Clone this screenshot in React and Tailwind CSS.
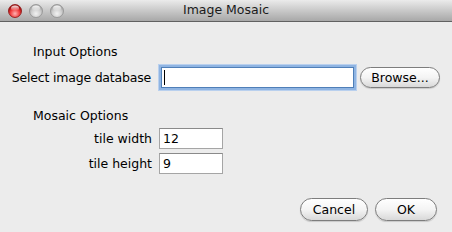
import React from "react";

const Light = ({ id, from, mid, to, stroke }) => (
  <svg width="14" height="14" viewBox="0 0 14 14">
    <defs>
      <radialGradient id={id} cx="50%" cy="70%" r="60%">
        <stop offset="0%" stopColor={from} />
        <stop offset="60%" stopColor={mid} />
        <stop offset="100%" stopColor={to} />
      </radialGradient>
      <linearGradient id={id + "h"} x1="0" y1="0" x2="0" y2="1">
        <stop offset="0%" stopColor="#fff" stopOpacity="0.9" />
        <stop offset="100%" stopColor="#fff" stopOpacity="0" />
      </linearGradient>
    </defs>
    <circle cx="7" cy="7" r="6.5" fill={`url(#${id})`} stroke={stroke} strokeWidth="0.8" />
    <ellipse cx="7" cy="4.2" rx="4" ry="2.6" fill={`url(#${id}h)`} />
  </svg>
);

const PillButton = ({ children, className }) => (
  <div
    className={
      "flex items-center justify-center rounded-full border border-[#7d7d7d] bg-linear-to-b from-white via-[#f4f4f4] to-[#d9d9d9] shadow-[0_1px_1px_rgba(0,0,0,0.15)] text-black " +
      className
    }
  >
    {children}
  </div>
);

const SmallField = ({ value }) => (
  <div className="w-[64px] h-[21px] border border-[#a5a5a5] border-t-[#8a8a8a] bg-white flex items-center pl-[3px] text-[12.5px] leading-4 text-black">
    {value}
  </div>
);

export default function App() {
  return (
    <div
      className="w-[452px] h-[232px] bg-[#ececec] flex flex-col overflow-hidden"
      style={{ fontFamily: '"DejaVu Sans", "Liberation Sans", sans-serif' }}
    >
      {/* title bar */}
      <div className="relative h-[22px] shrink-0 bg-linear-to-b from-[#ebebeb] to-[#a8a8a8] border-b border-[#616161] flex items-center">
        <div className="flex items-center gap-[7px] pl-[8px] pt-[1px]">
          <Light id="r" from="#ffb3b3" mid="#f03c3c" to="#9e0c0c" stroke="#8a1010" />
          <Light id="g1" from="#f2f2f2" mid="#cfcfcf" to="#a9a9a9" stroke="#8f8f8f" />
          <Light id="g2" from="#f2f2f2" mid="#cfcfcf" to="#a9a9a9" stroke="#8f8f8f" />
        </div>
        <div className="absolute inset-0 flex items-center justify-center text-[12.5px] text-[#1a1a1a]">
          Image Mosaic
        </div>
      </div>

      {/* body */}
      <div className="flex flex-col pt-[22px] text-[12.5px] leading-4 text-black">
        <div className="pl-[33px]">Input Options</div>

        <div className="flex items-center mt-[7px] h-[21px]">
          <div className="w-[151px] text-right tracking-[-0.2px]">Select image database</div>
          <div className="ml-[10px] w-[193px] h-[21px] bg-white border border-[#4f7fb8] shadow-[0_0_0_2px_#8fb4e2,0_0_0_3px_#b9d0ee] flex items-center pl-[2px]">
            <span className="w-px h-[15px] bg-black" />
          </div>
          <PillButton className="ml-[6px] w-[80px] h-[21px] text-[12.5px]">Browse...</PillButton>
        </div>

        <div className="pl-[33px] mt-[20px]">Mosaic Options</div>

        <div className="flex flex-col gap-[4px] mt-[4px]">
          <div className="flex items-center">
            <div className="w-[152px] text-right">tile width</div>
            <div className="ml-[7px]">
              <SmallField value="12" />
            </div>
          </div>
          <div className="flex items-center">
            <div className="w-[152px] text-right">tile height</div>
            <div className="ml-[7px]">
              <SmallField value="9" />
            </div>
          </div>
        </div>

        <div className="flex justify-end gap-[7px] mt-[24px] pr-[15px]">
          <PillButton className="w-[68px] h-[23px]">Cancel</PillButton>
          <PillButton className="w-[62px] h-[23px]">OK</PillButton>
        </div>
      </div>
    </div>
  );
}
